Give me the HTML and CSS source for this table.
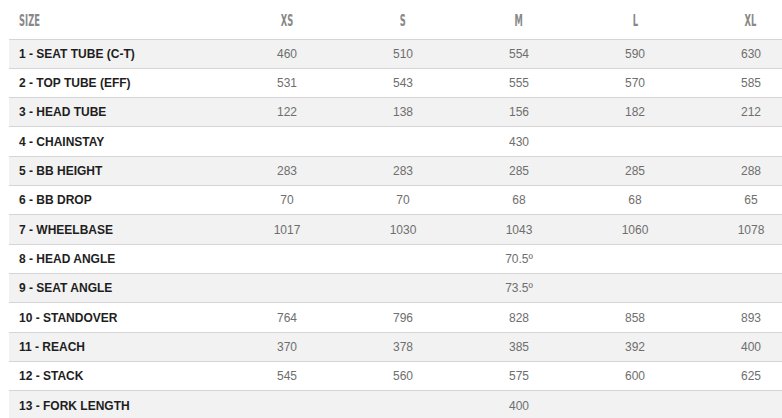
FILE: index.html
```html
<!DOCTYPE html>
<html>
<head>
<meta charset="utf-8">
<link rel="stylesheet" href="styles.css">
</head>
<body>
<div class="wrap">
<table class="geo">
<colgroup>
<col class="c-label"><col class="c-size"><col class="c-size"><col class="c-size"><col class="c-size"><col class="c-size">
</colgroup>
<thead>
<tr><th class="lab"><span>SIZE</span></th><th><span>XS</span></th><th><span>S</span></th><th><span>M</span></th><th><span>L</span></th><th><span>XL</span></th></tr>
</thead>
<tbody>
<tr><td class="lab">1 - SEAT TUBE (C-T)</td><td>460</td><td>510</td><td>554</td><td>590</td><td>630</td></tr>
<tr><td class="lab">2 - TOP TUBE (EFF)</td><td>531</td><td>543</td><td>555</td><td>570</td><td>585</td></tr>
<tr><td class="lab">3 - HEAD TUBE</td><td>122</td><td>138</td><td>156</td><td>182</td><td>212</td></tr>
<tr><td class="lab">4 - CHAINSTAY</td><td colspan="5">430</td></tr>
<tr><td class="lab">5 - BB HEIGHT</td><td>283</td><td>283</td><td>285</td><td>285</td><td>288</td></tr>
<tr><td class="lab">6 - BB DROP</td><td>70</td><td>70</td><td>68</td><td>68</td><td>65</td></tr>
<tr><td class="lab">7 - WHEELBASE</td><td>1017</td><td>1030</td><td>1043</td><td>1060</td><td>1078</td></tr>
<tr><td class="lab">8 - HEAD ANGLE</td><td colspan="5">70.5º</td></tr>
<tr><td class="lab">9 - SEAT ANGLE</td><td colspan="5">73.5º</td></tr>
<tr><td class="lab">10 - STANDOVER</td><td>764</td><td>796</td><td>828</td><td>858</td><td>893</td></tr>
<tr><td class="lab">11 - REACH</td><td>370</td><td>378</td><td>385</td><td>392</td><td>400</td></tr>
<tr><td class="lab">12 - STACK</td><td>545</td><td>560</td><td>575</td><td>600</td><td>625</td></tr>
<tr><td class="lab">13 - FORK LENGTH</td><td colspan="5">400</td></tr>
</tbody>
</table>
</div>
</body>
</html>
```
FILE: styles.css
```css
html, body {
  margin: 0;
  padding: 0;
  background: #ffffff;
  overflow: hidden;
}
.wrap {
  padding-left: 9px;
}
.geo {
  width: 800px;
  table-layout: fixed;
  border-collapse: collapse;
  font-family: "Liberation Sans", Arial, sans-serif;
  font-size: 12px;
}
.c-label { width: 220px; }
.c-size { width: 116px; }
.geo th {
  height: 39px;
  padding: 4px 0 0;
  box-sizing: border-box;
  text-align: center;
  font-family: "DejaVu Sans Condensed", "Liberation Sans Narrow", "Liberation Sans", sans-serif;
  font-weight: bold;
  font-size: 15px;
  color: #888888;
}
.geo th span {
  display: inline-block;
  transform: scaleX(0.62);
}
.geo th.lab {
  text-align: left;
  padding-left: 10px;
}
.geo th.lab span {
  transform-origin: left center;
}
.geo td {
  height: 28.33px;
  padding: 0;
  border-top: 1px solid #d5d5d5;
  text-align: center;
  color: #6e6e6e;
  vertical-align: middle;
}
.geo td.lab {
  text-align: left;
  padding-left: 10px;
  font-weight: bold;
  color: #1e1e1e;
}
.geo tbody tr:nth-child(odd) td {
  background: #f2f2f2;
}
```
